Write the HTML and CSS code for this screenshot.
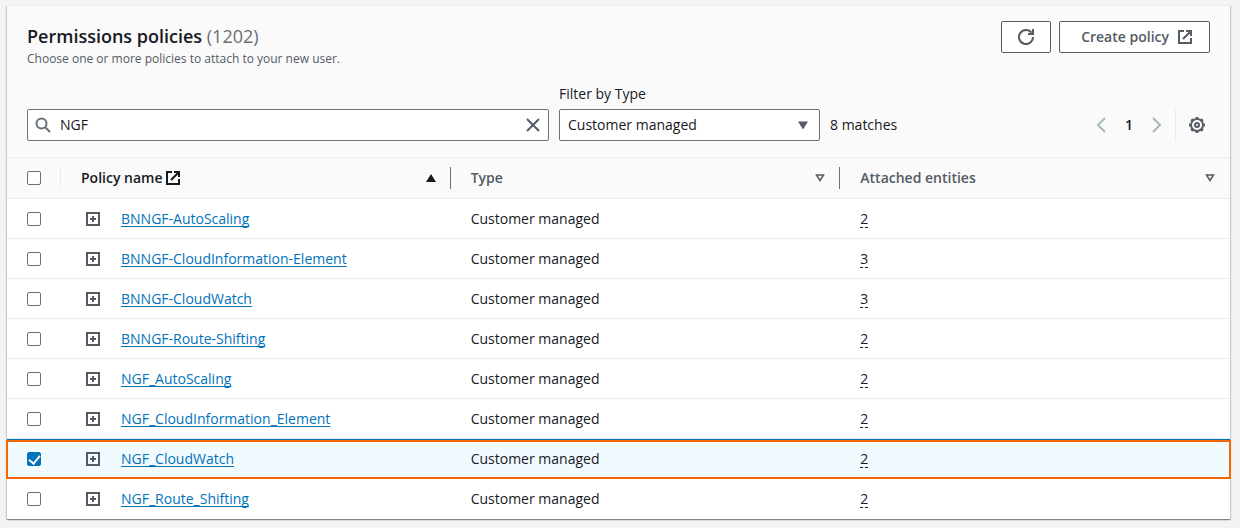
FILE: index.html
```html
<!DOCTYPE html>
<html lang="en">
<head>
    <meta charset="UTF-8" />
    <meta name="viewport" content="width=device-width, initial-scale=1.0" />
    <title>Permissions policies</title>
    <link rel="stylesheet" href="styles.css">
</head>
<body>
  <!-- shared icons -->
  <svg class="sprite" aria-hidden="true">
    <symbol id="external" viewBox="0 0 16 16">
      <path d="M7 2H2v12h12V9M9 2h5v5M6 10l7.500-7.500" />
    </symbol>
    <symbol id="plus" viewBox="0 0 14 14">
      <path d="M1 1h12v12H1zM7 4v6M4 7h6" />
    </symbol>
    <symbol id="sort" viewBox="0 0 10 8">
      <path d="M1.500 1h7L5 6.500z" />
    </symbol>
  </svg>

  <main class="card">
    <header class="card-header">
      <div class="heading">
        <div>
          <h2>Permissions policies <span class="counter">(1202)</span></h2>
          <p class="description">Choose one or more policies to attach to your new user.</p>
        </div>
        <div class="actions">
          <button type="button" class="button button-icon" aria-label="Refresh">
            <svg class="icon" viewBox="0 0 16 16"><path d="M15 8a7 7 0 1 1-1.500-4.300M10 5h5V0" /></svg>
          </button>
          <button type="button" class="button">
            Create policy
            <svg class="icon"><use href="#external" /></svg>
          </button>
        </div>
      </div>

      <div class="toolbar">
        <div class="search">
          <svg class="icon icon-search" viewBox="0 0 16 16"><circle cx="6.500" cy="6.500" r="5" /><path d="M10 10l5 5" /></svg>
          <input type="text" value="NGF" aria-label="Search policies" />
          <button type="button" class="clear" aria-label="Clear">
            <svg class="icon" viewBox="0 0 16 16"><path d="M2 2l12 12M14 2L2 14" /></svg>
          </button>
        </div>
        <div class="filter">
          <label for="type">Filter by Type</label>
          <div class="select">
            <select id="type">
              <option>Customer managed</option>
            </select>
            <svg class="arrow" viewBox="0 0 12 9"><path d="M1 .5h10L6 8.500z" /></svg>
          </div>
        </div>
        <div class="results">
          <span>8 matches</span>
          <nav class="pagination" aria-label="Pages">
            <button type="button" class="page-arrow" aria-label="Previous page" disabled>
              <svg class="icon" viewBox="0 0 16 16"><path d="M12 1L5 8l7 7" /></svg>
            </button>
            <button type="button" class="page">1</button>
            <button type="button" class="page-arrow" aria-label="Next page" disabled>
              <svg class="icon" viewBox="0 0 16 16"><path d="M4 1l7 7-7 7" /></svg>
            </button>
          </nav>
          <button type="button" class="settings" aria-label="Preferences">
            <svg class="icon" viewBox="0 0 16 16">
              <circle cx="8" cy="8" r="6" />
              <circle cx="8" cy="8" r="7.300" class="teeth" pathLength="80" stroke-dasharray="5" stroke-dashoffset="2.500" />
              <circle cx="8" cy="8" r="2" />
            </svg>
          </button>
        </div>
      </div>
    </header>

    <table>
      <thead>
        <tr>
          <th class="col-check"><input type="checkbox" aria-label="Select all policies" /></th>
          <th class="sorted">
            <div class="th">
              <span class="name">Policy name <svg class="icon"><use href="#external" /></svg></span>
              <svg class="sort-up" viewBox="0 0 10 8"><path d="M0 8h10L5 0z" /></svg>
            </div>
          </th>
          <th><div class="th">Type <svg class="sort"><use href="#sort" /></svg></div></th>
          <th><div class="th">Attached entities <svg class="sort"><use href="#sort" /></svg></div></th>
        </tr>
      </thead>
      <tbody>
        <tr>
          <td><input type="checkbox" aria-label="Select BNNGF-AutoScaling" /></td>
          <td><div class="policy"><button type="button" class="expand" aria-label="Expand"><svg><use href="#plus" /></svg></button><a href="#">BNNGF-AutoScaling</a></div></td>
          <td>Customer managed</td>
          <td><span class="count">2</span></td>
        </tr>
        <tr>
          <td><input type="checkbox" aria-label="Select BNNGF-CloudInformation-Element" /></td>
          <td><div class="policy"><button type="button" class="expand" aria-label="Expand"><svg><use href="#plus" /></svg></button><a href="#">BNNGF-CloudInformation-Element</a></div></td>
          <td>Customer managed</td>
          <td><span class="count">3</span></td>
        </tr>
        <tr>
          <td><input type="checkbox" aria-label="Select BNNGF-CloudWatch" /></td>
          <td><div class="policy"><button type="button" class="expand" aria-label="Expand"><svg><use href="#plus" /></svg></button><a href="#">BNNGF-CloudWatch</a></div></td>
          <td>Customer managed</td>
          <td><span class="count">3</span></td>
        </tr>
        <tr>
          <td><input type="checkbox" aria-label="Select BNNGF-Route-Shifting" /></td>
          <td><div class="policy"><button type="button" class="expand" aria-label="Expand"><svg><use href="#plus" /></svg></button><a href="#">BNNGF-Route-Shifting</a></div></td>
          <td>Customer managed</td>
          <td><span class="count">2</span></td>
        </tr>
        <tr>
          <td><input type="checkbox" aria-label="Select NGF_AutoScaling" /></td>
          <td><div class="policy"><button type="button" class="expand" aria-label="Expand"><svg><use href="#plus" /></svg></button><a href="#">NGF_AutoScaling</a></div></td>
          <td>Customer managed</td>
          <td><span class="count">2</span></td>
        </tr>
        <tr>
          <td><input type="checkbox" aria-label="Select NGF_CloudInformation_Element" /></td>
          <td><div class="policy"><button type="button" class="expand" aria-label="Expand"><svg><use href="#plus" /></svg></button><a href="#">NGF_CloudInformation_Element</a></div></td>
          <td>Customer managed</td>
          <td><span class="count">2</span></td>
        </tr>
        <tr class="selected">
          <td><input type="checkbox" aria-label="Select NGF_CloudWatch" checked /></td>
          <td><div class="policy"><button type="button" class="expand" aria-label="Expand"><svg><use href="#plus" /></svg></button><a href="#">NGF_CloudWatch</a></div></td>
          <td>Customer managed</td>
          <td><span class="count">2</span></td>
        </tr>
        <tr>
          <td><input type="checkbox" aria-label="Select NGF_Route_Shifting" /></td>
          <td><div class="policy"><button type="button" class="expand" aria-label="Expand"><svg><use href="#plus" /></svg></button><a href="#">NGF_Route_Shifting</a></div></td>
          <td>Customer managed</td>
          <td><span class="count">2</span></td>
        </tr>
      </tbody>
    </table>
  </main>
</body>
</html>
```

FILE: styles.css
```css
* {
  box-sizing: border-box;
}

body {
  margin: 0;
  padding: 5px 10px 8px 7px;
  background: #f2f3f3;
  color: #16191f;
  font-family: "Open Sans", "Noto Sans", sans-serif;
  font-size: 14px;
  line-height: 20px;
}

button,
input,
select {
  margin: 0;
  font: inherit;
  color: inherit;
}

button {
  padding: 0;
  border: none;
  background: none;
  cursor: pointer;
}

svg {
  display: block;
  flex: none;
  fill: none;
  stroke: currentColor;
  stroke-width: 2;
}

.sprite {
  position: absolute;
  width: 0;
  height: 0;
}

.icon {
  width: 16px;
  height: 16px;
}

.card {
  background: #fff;
  border-top: 1px solid #eaeded;
  box-shadow: 0 1px 1px 0 rgba(0, 28, 36, 0.3),
    1px 1px 1px 0 rgba(0, 28, 36, 0.15),
    -1px 1px 1px 0 rgba(0, 28, 36, 0.15);
}

.card-header {
  padding: 15px 20px 16px;
  background: #fafafa;
  border-bottom: 1px solid #eaeded;
}

.heading {
  display: flex;
  justify-content: space-between;
  align-items: flex-start;
}

h2 {
  margin: 4px 0 2px;
  font-size: 18px;
  font-weight: 600;
  line-height: 22px;
}

.counter {
  color: #687078;
  font-weight: 400;
}

.description {
  margin: 0;
  color: #545b64;
  font-size: 12px;
}

.actions {
  display: flex;
  gap: 8px;
}

.button {
  display: flex;
  align-items: center;
  gap: 8px;
  height: 32px;
  padding: 0 16px 0 21px;
  background: #fff;
  border: 1px solid #545b64;
  border-radius: 2px;
  color: #545b64;
  font-weight: 600;
}

.button-icon {
  padding: 0 16px;
}

/* search, type filter and pagination */
.toolbar {
  display: grid;
  grid-template-columns: 2fr 1fr 380px;
  column-gap: 10px;
  align-items: end;
  margin-top: 15px;
}

.search,
.select {
  display: flex;
  align-items: center;
  height: 32px;
  background: #fff;
  border: 1px solid #687078;
  border-radius: 2px;
}

.search {
  gap: 9px;
  padding: 0 7px;
}

.search input {
  flex: 1;
  min-width: 0;
  padding: 0;
  border: none;
  outline: none;
  background: none;
}

.icon-search {
  color: #687078;
}

.clear {
  color: #545b64;
}

.filter label {
  display: block;
  margin-bottom: 5px;
}

.select select {
  flex: 1;
  height: 30px;
  margin-right: -24px;
  padding: 0 24px 0 8px;
  border: none;
  outline: none;
  background: none;
  appearance: none;
}

.arrow {
  width: 12px;
  height: 9px;
  margin-right: 10px;
  fill: #545b64;
  stroke: none;
  pointer-events: none;
}

.results {
  display: flex;
  align-items: center;
  height: 32px;
}

.pagination {
  display: flex;
  align-items: center;
  gap: 8px;
  margin-left: auto;
  padding-right: 10px;
}

.page {
  width: 24px;
  font-weight: 600;
}

.page-arrow {
  color: #aab7b8;
}

.settings {
  display: flex;
  align-items: center;
  height: 32px;
  padding: 0 5px 0 13px;
  border-left: 1px solid #eaeded;
  color: #545b64;
}

.teeth {
  stroke-width: 1.5;
}

table {
  width: 100%;
  table-layout: fixed;
  border-collapse: separate;
  border-spacing: 0;
}

th,
td {
  height: 40px;
  padding: 0 20px;
  border-bottom: 1px solid #eaeded;
  text-align: left;
}

th {
  height: 41px;
  background: #fafafa;
  color: #545b64;
  font-weight: 600;
}

tbody tr:last-child td {
  border-bottom: none;
}

.col-check {
  width: 54px;
}

/* header cells carry the column dividers */
.th {
  display: flex;
  align-items: center;
  justify-content: space-between;
  height: 22px;
  margin-right: -20px;
  padding-right: 14px;
  border-right: 1px solid #687078;
}

th:last-child .th {
  border-right: none;
  padding-right: 15px;
}

.sorted {
  color: #16191f;
}

.sorted .th {
  margin-left: -21px;
  padding-left: 20px;
  border-left: 1px solid #eaeded;
}

.name {
  display: flex;
  align-items: center;
  gap: 3px;
}

.sort,
.sort-up {
  width: 10px;
  height: 8px;
  stroke-width: 1.5;
}

.sort-up {
  fill: currentColor;
  stroke: none;
}

.policy {
  display: flex;
  align-items: center;
  gap: 21px;
  padding-left: 5px;
}

.expand {
  color: #545b64;
}

.expand svg {
  width: 14px;
  height: 14px;
}

a {
  color: #0073bb;
  text-underline-offset: 2px;
  text-decoration-skip-ink: none;
}

.count {
  display: inline-block;
  line-height: 17px;
  border-bottom: 1px dashed #16191f;
}

input[type="checkbox"] {
  display: block;
  width: 14px;
  height: 14px;
  appearance: none;
  background: #fff;
  border: 1px solid #687078;
  border-radius: 2px;
}

input[type="checkbox"]:checked {
  background: #0073bb;
  border-color: #0073bb;
}

input[type="checkbox"]:checked::before {
  content: "";
  display: block;
  width: 5px;
  height: 9px;
  margin-left: 3px;
  border: solid #fff;
  border-width: 0 2px 2px 0;
  transform: rotate(40deg);
}

.selected {
  position: relative;
}

.selected td {
  background: #f1faff;
  border-top: 1px solid #0073bb;
}

/* highlight frame over the selected row */
.selected td:last-child::after {
  content: "";
  position: absolute;
  inset: 1px -1px 0;
  border: 2px solid #f56600;
  pointer-events: none;
}
```
